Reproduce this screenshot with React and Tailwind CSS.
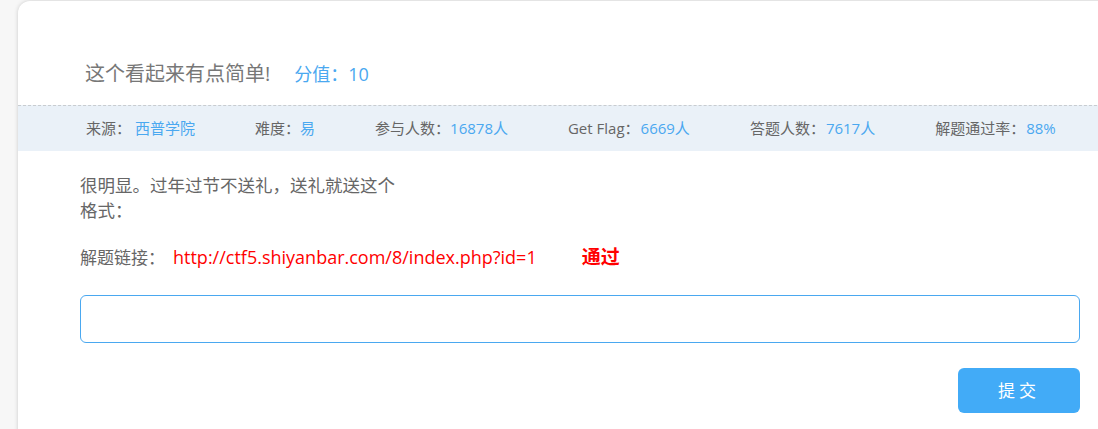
export default function App() {
  const stats = [
    { label: '来源：', value: '西普学院', extra: 'ml-[4px]' },
    { label: '难度：', value: '易', extra: '' },
    { label: '参与人数：', value: '16878人', extra: '' },
    { label: 'Get Flag：', value: '6669人', extra: 'ml-px' },
    { label: '答题人数：', value: '7617人', extra: 'ml-px' },
    { label: '解题通过率：', value: '88%', extra: 'ml-px' },
  ];

  return (
    <div
      className="h-[429px] w-[1098px] overflow-hidden bg-[#f7f7f7] pt-px"
      style={{ fontFamily: '"Open Sans", "Noto Sans CJK SC", sans-serif' }}
    >
      <div className="ml-[18px] h-[460px] w-[1124px] rounded-tl-[12px] bg-white shadow-[0_0_4px_rgba(0,0,0,0.18)]">
        <div className="flex h-[104px] items-end pb-[20px] pl-[67px]">
          <span className="text-[20px] leading-[22px] text-[#777]">这个看起来有点简单!</span>
          <span className="ml-[24px] text-[18px] leading-[22px] text-[#4aa8f0]">分值：10</span>
        </div>

        <div className="flex h-[46px] items-center gap-[60px] border-t border-dashed border-[#c8ccd0] bg-[#eaf1f8] pl-[68px] text-[15px] text-[#666]">
          {stats.map((s) => (
            <div key={s.label} className="flex items-center">
              <span>{s.label}</span>
              <span className={`${s.extra} text-[#4aa8f0]`}>{s.value}</span>
            </div>
          ))}
        </div>

        <div className="pl-[62px] pr-[62px] pt-[22px]">
          <p className="text-[17.5px] leading-[25px] text-[#666]">
            很明显。过年过节不送礼，送礼就送这个
            <br />
            格式：
          </p>

          <div className="mt-[22px] flex items-center text-[17px] leading-[25px]">
            <span className="text-[#666]">解题链接：</span>
            <span className="ml-[8px] text-[18px] text-[#ff0000]">http://ctf5.shiyanbar.com/8/index.php?id=1</span>
            <span className="ml-[45px] text-[19px] font-bold text-[#ff0000]">通过</span>
          </div>

          <input
            type="text"
            className="mt-[25px] block h-[48px] w-[1000px] rounded-[6px] border border-[#4aa8f0] bg-white px-3 outline-none"
          />

          <div className="mt-[25px] flex w-[1000px] justify-end">
            <button className="h-[45px] w-[122px] rounded-[6px] bg-[#42abf7] text-[17px] tracking-[4px] text-white">
              提交
            </button>
          </div>
        </div>
      </div>
    </div>
  );
}
